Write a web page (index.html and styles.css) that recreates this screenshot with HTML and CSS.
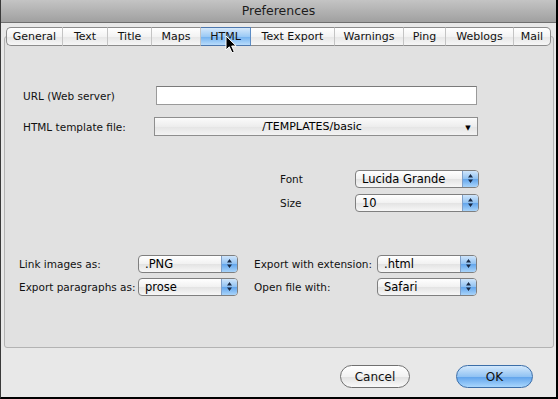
FILE: index.html
```html
<!DOCTYPE html>
<html lang="en">
<head>
  <meta charset="UTF-8" />
  <title>Preferences</title>
  <link rel="stylesheet" href="styles.css">
</head>
<body>

  <div class="window">
    <div class="title-bar">Preferences</div>

    <div class="content">
      <div class="tabs">
        <span class="tab" style="width:57px">General</span>
        <span class="tab" style="width:45px">Text</span>
        <span class="tab" style="width:44px">Title</span>
        <span class="tab" style="width:49px">Maps</span>
        <span class="tab selected" style="width:50px">HTML</span>
        <span class="tab" style="width:84px">Text Export</span>
        <span class="tab" style="width:69px">Warnings</span>
        <span class="tab" style="width:42px">Ping</span>
        <span class="tab" style="width:68px">Weblogs</span>
        <span class="tab" style="width:37px">Mail</span>
        <!-- mouse pointer over the HTML tab -->
        <svg class="cursor" width="13" height="19" viewBox="0 0 13 19">
          <path d="M1 1 L1 15 L4.3 11.8 L7 17.8 L9.3 16.8 L6.7 11 L11.2 11 Z" fill="#000" stroke="#fff" stroke-width="1"/>
        </svg>
      </div>

      <div class="panel">
        <div class="row url-row">
          <label class="lbl">URL (Web server)</label>
          <input type="text" class="text-field" />
        </div>

        <div class="row template-row">
          <label class="lbl">HTML template file:</label>
          <div class="file-popup">
            <span class="file-val">/TEMPLATES/basic</span>
            <span class="file-arrow">&#9660;</span>
          </div>
        </div>

        <div class="row font-row">
          <label class="lbl">Font</label>
          <div class="popup wide">
            <span class="val">Lucida Grande</span>
            <span class="cap"><svg width="7" height="11" viewBox="0 0 7 11"><path d="M3.5 1 L6 4.5 L1 4.5 Z M3.5 10 L6 6.5 L1 6.5 Z" fill="#1a2a44"/></svg></span>
          </div>
        </div>

        <div class="row size-row">
          <label class="lbl">Size</label>
          <div class="popup wide">
            <span class="val">10</span>
            <span class="cap"><svg width="7" height="11" viewBox="0 0 7 11"><path d="M3.5 1 L6 4.5 L1 4.5 Z M3.5 10 L6 6.5 L1 6.5 Z" fill="#1a2a44"/></svg></span>
          </div>
        </div>

        <div class="export-grid">
          <div class="row">
            <label class="lbl left">Link images as:</label>
            <div class="popup">
              <span class="val">.PNG</span>
              <span class="cap"><svg width="7" height="11" viewBox="0 0 7 11"><path d="M3.5 1 L6 4.5 L1 4.5 Z M3.5 10 L6 6.5 L1 6.5 Z" fill="#1a2a44"/></svg></span>
            </div>
          </div>
          <div class="row">
            <label class="lbl right">Export with extension:</label>
            <div class="popup">
              <span class="val">.html</span>
              <span class="cap"><svg width="7" height="11" viewBox="0 0 7 11"><path d="M3.5 1 L6 4.5 L1 4.5 Z M3.5 10 L6 6.5 L1 6.5 Z" fill="#1a2a44"/></svg></span>
            </div>
          </div>
          <div class="row">
            <label class="lbl left">Export paragraphs as:</label>
            <div class="popup">
              <span class="val">prose</span>
              <span class="cap"><svg width="7" height="11" viewBox="0 0 7 11"><path d="M3.5 1 L6 4.5 L1 4.5 Z M3.5 10 L6 6.5 L1 6.5 Z" fill="#1a2a44"/></svg></span>
            </div>
          </div>
          <div class="row">
            <label class="lbl right">Open file with:</label>
            <div class="popup">
              <span class="val">Safari</span>
              <span class="cap"><svg width="7" height="11" viewBox="0 0 7 11"><path d="M3.5 1 L6 4.5 L1 4.5 Z M3.5 10 L6 6.5 L1 6.5 Z" fill="#1a2a44"/></svg></span>
            </div>
          </div>
        </div>
      </div>

      <div class="buttons">
        <button class="btn">Cancel</button>
        <button class="btn default">OK</button>
      </div>
    </div>
  </div>

</body>
</html>
```

FILE: styles.css
```css
body {
  margin: 0;
  background-color: #000;
  font-family: "DejaVu Sans", "Noto Sans", sans-serif;
  font-size: 10.5px;
  color: #000;
}

.window {
  width: 558px;
  height: 399px;
  box-sizing: border-box;
  border-left: 1px solid #3a3a3a;
  border-right: 2px solid #000;
  border-bottom: 2px solid #000;
  background-color: #e8e8e8;
  display: flex;
  flex-direction: column;
}

.title-bar {
  height: 22px;
  line-height: 22px;
  text-align: center;
  font-size: 12.5px;
  color: #1c1c1c;
  background: linear-gradient(#c4c4c4, #a0a0a0);
  border-bottom: 1px solid #6f6f6f;
}

.content {
  flex: 1;
  padding: 4px 0 0 3px;
}

/* tab strip */
.tabs {
  position: relative;
  z-index: 1;
  display: flex;
  margin-left: 2px;
  margin-bottom: -10px;
  height: 19px;
}

.tab {
  box-sizing: border-box;
  height: 19px;
  line-height: 17px;
  text-align: center;
  font-size: 11px;
  white-space: nowrap;
  color: #111;
  border-top: 1px solid #8c8c8c;
  border-bottom: 1px solid #8c8c8c;
  border-right: 1px solid #c4c4c4;
  background: linear-gradient(#ffffff, #f3f3f3 50%, #e6e6e6 51%, #f6f6f6);
}

.tab:first-child {
  border-left: 1px solid #8c8c8c;
  border-radius: 5px 0 0 5px;
}

.tab:nth-last-child(2) {
  border-right: 1px solid #8c8c8c;
  border-radius: 0 5px 5px 0;
}

.tab.selected {
  background: linear-gradient(#d6e9fb, #9ccaf5 50%, #72b1ef 51%, #b9dcfb);
  border-right-color: #5c8cc4;
  border-top-color: #4d77ad;
  border-bottom-color: #4d77ad;
}

.cursor {
  position: absolute;
  left: 219px;
  top: 8px;
}

/* bordered box under the tabs */
.panel {
  box-sizing: border-box;
  width: 550px;
  height: 312px;
  padding: 49px 0 0 14px;
  background-color: #e1e1e1;
  border: 1px solid #b3b3b3;
  border-radius: 3px;
}

.row {
  display: flex;
  align-items: center;
  height: 19px;
}

.lbl {
  color: #111;
  white-space: nowrap;
}

.url-row .lbl {
  width: 133px;
  margin-left: 4px;
}

.text-field {
  box-sizing: border-box;
  width: 321px;
  height: 19px;
  margin: 0;
  border: 1px solid #9a9a9a;
  border-top-color: #7a7a7a;
  background-color: #fff;
}

.template-row {
  margin-top: 12px;
}

.template-row .lbl {
  width: 131px;
  margin-left: 4px;
}

.file-popup {
  box-sizing: border-box;
  width: 324px;
  height: 19px;
  display: flex;
  align-items: center;
  border: 1px solid #8e8e8e;
  background: linear-gradient(#fbfbfb, #ededed 50%, #e4e4e4 51%, #f3f3f3);
}

.file-val {
  flex: 1;
  text-align: center;
  padding-left: 10px;
  font-size: 11px;
}

.file-arrow {
  width: 18px;
  font-size: 7px;
  text-align: center;
  margin-top: 3px;
}

.font-row {
  margin-top: 33px;
}

.size-row {
  margin-top: 5px;
}

.font-row .lbl,
.size-row .lbl {
  width: 75px;
  margin-left: 261px;
}

/* aqua style popup menu */
.popup {
  box-sizing: border-box;
  width: 100px;
  height: 18px;
  display: flex;
  border: 1px solid #7f7f7f;
  border-radius: 4px;
  overflow: hidden;
  background: linear-gradient(#ffffff, #f1f1f1 50%, #e3e3e3 51%, #f7f7f7);
}

.popup.wide {
  width: 124px;
}

.popup .val {
  flex: 1;
  padding-left: 6px;
  line-height: 16px;
  font-size: 11.5px;
  white-space: nowrap;
}

.popup .cap {
  width: 15px;
  display: flex;
  align-items: center;
  justify-content: center;
  border-left: 1px solid #7f9fc8;
  background: linear-gradient(#cfe5fb, #8fc1f2 50%, #62a5ec 51%, #a9d4fa);
}

.export-grid {
  display: grid;
  grid-template-columns: 235px 223px;
  row-gap: 4px;
  margin-top: 42px;
}

.lbl.left {
  width: 119px;
}

.lbl.right {
  width: 123px;
}

/* bottom buttons */
.buttons {
  display: flex;
  justify-content: flex-end;
  gap: 46px;
  margin: 17px 23px 0 0;
}

.btn {
  height: 23px;
  padding: 0;
  font-family: "DejaVu Sans", sans-serif;
  font-size: 12px;
  color: #111;
  border: 1px solid #707070;
  border-radius: 12px;
  background: linear-gradient(#ffffff, #f2f2f2 50%, #e0e0e0 51%, #fafafa);
  width: 70px;
}

.btn.default {
  width: 77px;
  border-color: #3c6ea8;
  background: linear-gradient(#d3e8fc, #92c3f3 50%, #5fa2eb 51%, #a8d6fd);
}
```
